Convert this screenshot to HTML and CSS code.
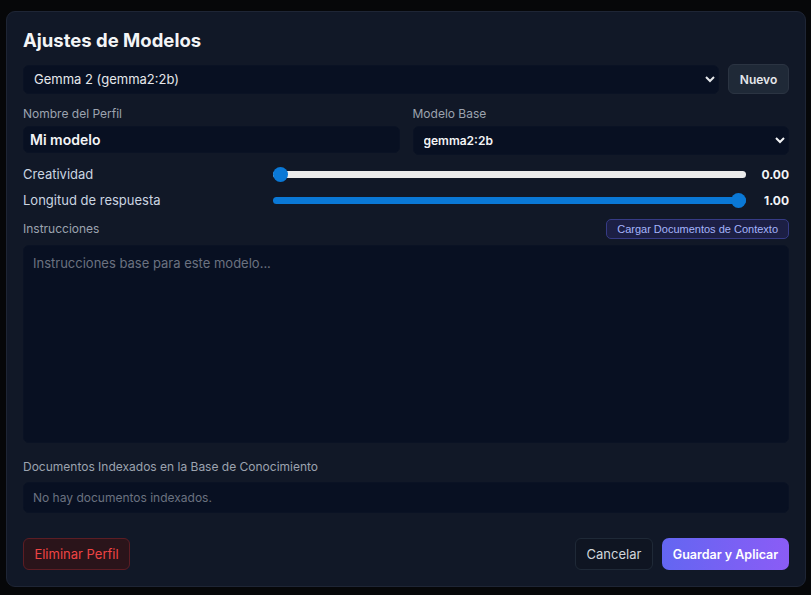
FILE: index.html
```html
<!DOCTYPE html>
<html lang="es">
<head>
<meta charset="utf-8">
<title>Ajustes de Modelos</title>
<link rel="stylesheet" href="styles.css">
</head>
<body>
<div class="modal">
  <h2 class="title">Ajustes de Modelos</h2>

  <div class="profile-row">
    <select class="field select profile-select">
      <option>Gemma 2 (gemma2:2b)</option>
    </select>
    <button class="btn btn-new">Nuevo</button>
  </div>

  <div class="two-col">
    <div class="col">
      <label class="label">Nombre del Perfil</label>
      <input class="field input" type="text" value="Mi modelo">
    </div>
    <div class="col">
      <label class="label">Modelo Base</label>
      <select class="field select base-select">
        <option>gemma2:2b</option>
      </select>
    </div>
  </div>

  <div class="slider-row first">
    <span class="slider-label">Creatividad</span>
    <input class="range" type="range" min="0" max="1" step="0.01" value="0" style="--fill:0%">
    <span class="slider-value">0.00</span>
  </div>
  <div class="slider-row">
    <span class="slider-label">Longitud de respuesta</span>
    <input class="range" type="range" min="0" max="1" step="0.01" value="1" style="--fill:100%">
    <span class="slider-value">1.00</span>
  </div>

  <div class="instr-head">
    <label class="label">Instrucciones</label>
    <button class="btn btn-context">Cargar Documentos de Contexto</button>
  </div>
  <textarea class="field textarea" placeholder="Instrucciones base para este modelo..."></textarea>

  <label class="label docs-label">Documentos Indexados en la Base de Conocimiento</label>
  <div class="field docs-box">No hay documentos indexados.</div>

  <div class="footer">
    <button class="btn btn-danger">Eliminar Perfil</button>
    <div class="footer-right">
      <button class="btn btn-cancel">Cancelar</button>
      <button class="btn btn-primary">Guardar y Aplicar</button>
    </div>
  </div>
</div>
</body>
</html>
```

FILE: styles.css
```css
* { box-sizing: border-box; }

html, body {
  margin: 0;
  padding: 0;
  background: #060709;
  height: 100%;
}

body {
  font-family: Inter, "Noto Sans", sans-serif;
  color: #e5e7eb;
  padding: 11px 5px 0 6px;
}

.modal {
  width: 800px;
  height: 576px;
  background: #111827;
  border: 1px solid #1e2535;
  border-radius: 9px;
  padding: 16px;
  display: flex;
  flex-direction: column;
}

.title {
  margin: 0 0 12px 0;
  font-size: 18.5px;
  line-height: 24px;
  font-weight: 700;
  color: #f3f4f6;
}

.field {
  background: #081022;
  border: 1px solid #0a1224;
  border-radius: 6px;
  color: #f3f4f6;
  color-scheme: dark;
}

.profile-row {
  display: flex;
  gap: 9px;
  align-items: center;
  height: 30px;
}

.select {
  font-family: Inter, "Noto Sans", sans-serif;
  font-size: 13px;
  padding: 0 6px;
  outline: none;
}

.profile-select {
  flex: 1;
  height: 29px;
  color: #e5e7eb;
}

.btn {
  font-family: Inter, "Noto Sans", sans-serif;
  font-size: 13px;
  cursor: pointer;
  border-radius: 6px;
  white-space: nowrap;
  padding: 0;
}

.btn-new {
  width: 61px;
  height: 30px;
  background: #1f2937;
  border: 1px solid #2b3442;
  color: #e5e7eb;
  font-size: 12px;
  font-weight: 600;
}

.two-col {
  margin-top: 12px;
  display: grid;
  grid-template-columns: 1fr 1fr;
  gap: 13px;
}

.col {
  display: flex;
  flex-direction: column;
}

.label {
  font-size: 12px;
  line-height: 16px;
  color: #9ca3af;
}

.col .label { margin-bottom: 4px; }

.input {
  height: 27px;
  font-family: Inter, "Noto Sans", sans-serif;
  font-size: 14px;
  font-weight: 600;
  padding: 0 6px;
  outline: none;
}

.base-select {
  height: 29px;
  font-size: 12px;
  font-weight: 600;
  padding: 0 6px;
}

.slider-row {
  display: grid;
  grid-template-columns: 240px 1fr 33px;
  column-gap: 10px;
  align-items: center;
  height: 20px;
  margin-top: 6px;
}

.slider-row.first { margin-top: 9px; }

.slider-label {
  font-size: 13px;
  color: #cbd5e1;
}

.slider-value {
  font-size: 12px;
  font-weight: 700;
  color: #f3f4f6;
  text-align: right;
}

.range {
  -webkit-appearance: none;
  appearance: none;
  width: 100%;
  height: 7px;
  margin: 0;
  border-radius: 4px;
  background: linear-gradient(to right, #0a78d6 0, #0a78d6 var(--fill), #ececec var(--fill), #ececec 100%);
  outline: none;
}

.range::-webkit-slider-thumb {
  -webkit-appearance: none;
  appearance: none;
  width: 15px;
  height: 15px;
  border-radius: 50%;
  background: #0a78d6;
  border: none;
}

.instr-head {
  margin-top: 9px;
  display: flex;
  justify-content: space-between;
  align-items: center;
  height: 20px;
}

.btn-context {
  height: 20px;
  padding: 0 10px;
  font-family: "Liberation Sans", Arial, sans-serif;
  font-size: 11px;
  color: #a5b4fc;
  background: #1c1f44;
  border: 1px solid #363b85;
  border-radius: 5px;
}

.textarea {
  margin-top: 6px;
  height: 198px;
  width: 100%;
  resize: none;
  font-family: Inter, "Noto Sans", sans-serif;
  font-size: 13px;
  line-height: 18px;
  padding: 8px 9px;
  outline: none;
}

.textarea::placeholder { color: #6b7280; }

.docs-label {
  margin-top: 16px;
}

.docs-box {
  margin-top: 7px;
  height: 31px;
  display: flex;
  align-items: center;
  padding: 0 9px;
  font-size: 12px;
  color: #6b7280;
}

.footer {
  margin-top: 25px;
  display: flex;
  justify-content: space-between;
  align-items: center;
}

.footer-right {
  display: flex;
  gap: 9px;
}

.btn-danger {
  height: 32px;
  width: 107px;
  color: #ef4444;
  background: #2a141a;
  border: 1px solid #5c1d24;
}

.btn-cancel {
  height: 32px;
  width: 78px;
  color: #d1d5db;
  background: #0f1522;
  border: 1px solid #1f2937;
}

.btn-primary {
  height: 32px;
  width: 127px;
  font-size: 12.5px;
  font-weight: 600;
  color: #ffffff;
  background: linear-gradient(to right, #6366f1, #8b5cf6);
  border: none;
  border-radius: 7px;
}
```
